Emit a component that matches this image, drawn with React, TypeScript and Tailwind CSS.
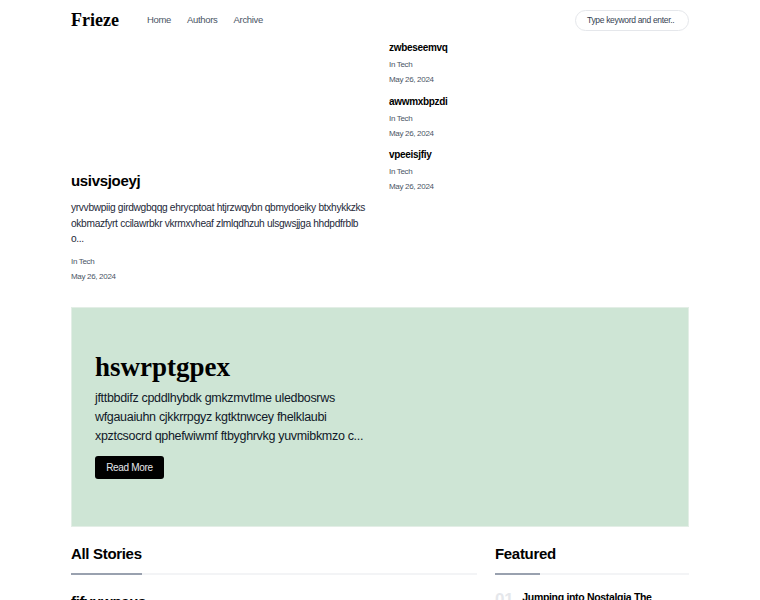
import React from "react";

const sans = { fontFamily: '"Liberation Sans", Arial, sans-serif', letterSpacing: "-0.02em" };
const serif = { fontFamily: '"Liberation Serif", "Times New Roman", serif', letterSpacing: "0" };

function SideItem({ title }: { title: string }) {
  return (
    <div className="flex flex-col">
      <div className="text-[10px] font-bold leading-[13px] text-black">{title}</div>
      <div className="mt-[5px] text-[8px] leading-[11px] text-gray-600">In Tech</div>
      <div className="mt-[4px] text-[8px] leading-[11px] text-gray-600">May 26, 2024</div>
    </div>
  );
}

export default function App() {
  return (
    <div className="min-h-screen bg-white text-black" style={sans}>
      <div className="mx-auto w-[618px]">
        <header className="flex h-[40px] items-center">
          <div className="text-[18px] font-bold leading-none text-black" style={serif}>
            Frieze
          </div>
          <nav className="ml-[28px] flex gap-[16px] text-[9.5px] text-gray-600">
            <span>Home</span>
            <span>Authors</span>
            <span>Archive</span>
          </nav>
          <div className="ml-auto flex h-[21px] w-[114px] items-center whitespace-nowrap rounded-full border border-gray-200 px-[11px] text-[8.5px] text-gray-700">
            Type keyword and enter..
          </div>
        </header>

        <section className="flex gap-[19px]">
          <div className="flex w-[299px] flex-col">
            <div className="h-[131px]" />
            <div className="text-[15px] font-bold leading-[20px]">usivsjoeyj</div>
            <p className="mt-[9px] text-[10.2px] leading-[15.5px] text-gray-800">
              yrvvbwpiig girdwgbqqg ehrycptoat htjrzwqybn qbmydoeiky btxhykkzks okbmazfyrt ccilawrbkr vkrmxvheaf zlmlqdhzuh ulsgwsjjga hhdpdfrblb o...
            </p>
            <div className="mt-[9.5px] text-[8px] leading-[11px] text-gray-600">In Tech</div>
            <div className="mt-[4px] text-[8px] leading-[11px] text-gray-600">May 26, 2024</div>
          </div>
          <div className="flex flex-col gap-[9.5px] pt-[1px]">
            <SideItem title="zwbeseemvq" />
            <SideItem title="awwmxbpzdi" />
            <SideItem title="vpeeisjfiy" />
          </div>
        </section>

        <section className="mt-[25px] h-[220px] border border-[#e3eee6] bg-[#cee5d5] px-[23px] pt-[44px]">
          <h2 className="text-[27px] font-bold leading-[30px] text-black" style={serif}>
            hswrptgpex
          </h2>
          <p className="mt-[7px] w-[285px] text-[12.5px] leading-[19px] text-gray-900">
            jfttbbdifz cpddlhybdk gmkzmvtlme uledbosrws wfgauaiuhn cjkkrrpgyz kgtktnwcey fhelklaubi xpztcsocrd qphefwiwmf ftbyghrvkg yuvmibkmzo c...
          </p>
          <button className="mt-[10px] flex h-[23px] w-[69px] items-center justify-center rounded-[3px] bg-black text-[10px] text-gray-200">
            Read More
          </button>
        </section>

        <section className="mt-[17px] flex gap-[18px]">
          <div className="w-[406px]">
            <h3 className="text-[15px] font-bold leading-[20px]">All Stories</h3>
            <div className="mt-[9px] flex h-[2px]">
              <div className="w-[71px] bg-gray-400" />
              <div className="flex-1 bg-gray-100" />
            </div>
            <div className="mt-[17px] text-[15px] font-bold leading-[20px]">fifyuwpaus</div>
          </div>
          <div className="w-[194px]">
            <h3 className="text-[15px] font-bold leading-[20px]">Featured</h3>
            <div className="mt-[9px] flex h-[2px]">
              <div className="w-[45px] bg-gray-400" />
              <div className="flex-1 bg-gray-100" />
            </div>
            <div className="mt-[15px] flex items-start gap-[9px]">
              <span className="text-[17px] font-bold leading-[20px] text-gray-200">01</span>
              <span className="text-[10.5px] font-bold leading-[14px]">Jumping into Nostalgia The</span>
            </div>
          </div>
        </section>
      </div>
    </div>
  );
}
